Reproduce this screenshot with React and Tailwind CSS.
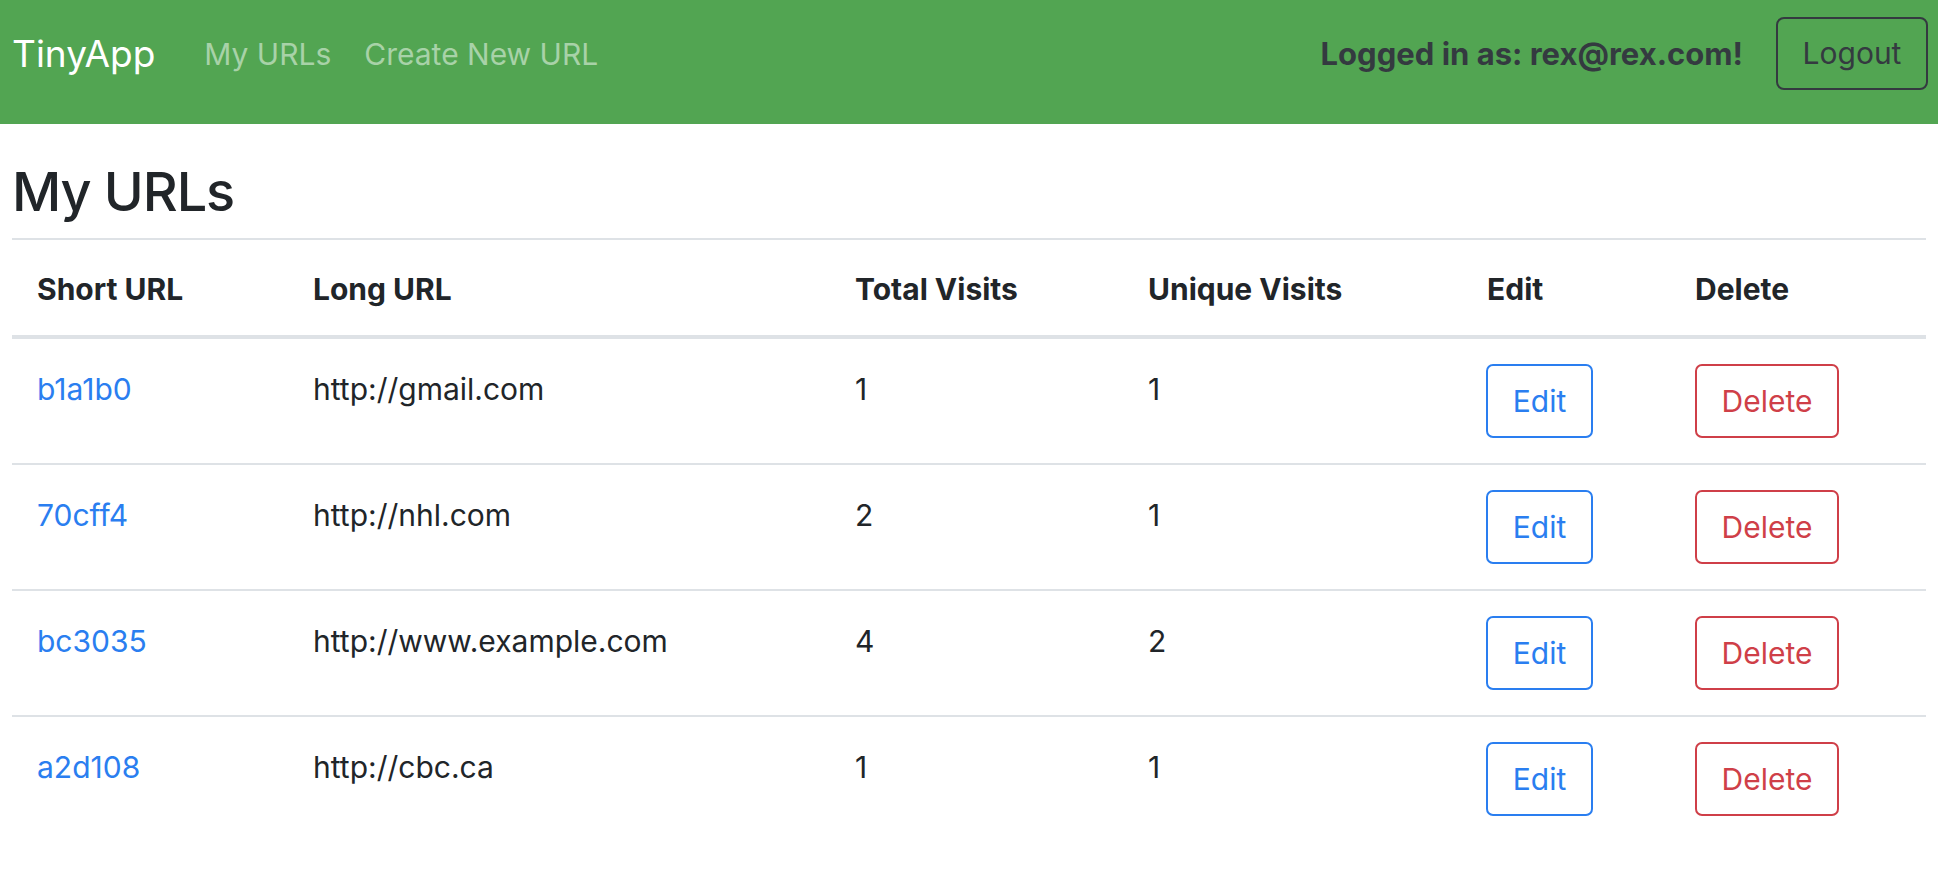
import React from 'react';

const urls = [
    { short: 'b1a1b0', long: 'http://gmail.com', total: 1, unique: 1 },
    { short: '70cff4', long: 'http://nhl.com', total: 2, unique: 1 },
    { short: 'bc3035', long: 'http://www.example.com', total: 4, unique: 2 },
    { short: 'a2d108', long: 'http://cbc.ca', total: 1, unique: 1 },
];

export default function App() {
    return (
        <div className="min-h-screen bg-white text-[#212529] font-['Inter','Liberation_Sans',sans-serif]">
            <nav className="h-[124px] bg-[#52a552] pl-[12px] pr-[10px] pt-[17px]">
                <div className="flex h-[73px] items-center">
                    <a href="#" className="text-[37px] leading-[44px] text-white">TinyApp</a>
                    <a href="#" className="ml-[49px] text-[30px] leading-[44px] text-[#a8d2a8]">My URLs</a>
                    <a href="#" className="ml-[33px] text-[30px] leading-[44px] text-[#a8d2a8]">Create New URL</a>
                    <span className="ml-auto text-[31px] font-bold leading-[44px] text-[#343a40]">
                        Logged in as: rex@rex.com!
                    </span>
                    <button className="ml-[33px] h-[73px] w-[152px] rounded-[8px] border-2 border-[#343a40] text-[30px] text-[#343a40]">
                        Logout
                    </button>
                </div>
            </nav>

            <div className="px-[12px]">
                <h2 className="mt-[33px] mb-[11px] text-[54px] font-medium leading-[70px] tracking-[-0.02em]">My URLs</h2>
                <table className="w-full table-fixed border-collapse text-[30px] leading-[44px]">
                    <colgroup>
                        <col className="w-[276px]" />
                        <col className="w-[542px]" />
                        <col className="w-[293px]" />
                        <col className="w-[339px]" />
                        <col className="w-[208px]" />
                        <col />
                    </colgroup>
                    <thead>
                        <tr className="border-t-2 border-b-4 border-[#dee2e6] text-left">
                            <th className="pl-[25px] pt-[27px] pb-[24px] font-bold">Short URL</th>
                            <th className="pl-[25px] pt-[27px] pb-[24px] font-bold">Long URL</th>
                            <th className="pl-[25px] pt-[27px] pb-[24px] font-bold">Total Visits</th>
                            <th className="pl-[25px] pt-[27px] pb-[24px] font-bold">Unique Visits</th>
                            <th className="pl-[25px] pt-[27px] pb-[24px] font-bold">Edit</th>
                            <th className="pl-[25px] pt-[27px] pb-[24px] font-bold">Delete</th>
                        </tr>
                    </thead>
                    <tbody>
                        {urls.map((u, i) => (
                            <tr key={u.short} className={i > 0 ? 'border-t-2 border-[#dee2e6]' : ''}>
                                <td className="pl-[25px] pt-[28px] pb-[22px] align-top">
                                    <a href="#" className="text-[#2a7ef0]">{u.short}</a>
                                </td>
                                <td className="pl-[25px] pt-[28px] pb-[22px] align-top">{u.long}</td>
                                <td className="pl-[25px] pt-[28px] pb-[22px] align-top">{u.total}</td>
                                <td className="pl-[25px] pt-[28px] pb-[22px] align-top">{u.unique}</td>
                                <td className="pl-[24px] pt-[25px] pb-[25px] align-top">
                                    <button className="h-[74px] w-[107px] rounded-[7px] border-2 border-[#2a7ef0] text-[30px] text-[#2a7ef0]">
                                        Edit
                                    </button>
                                </td>
                                <td className="pl-[25px] pt-[25px] pb-[25px] align-top">
                                    <button className="h-[74px] w-[144px] rounded-[7px] border-2 border-[#cf3f48] text-[30px] text-[#cf3f48]">
                                        Delete
                                    </button>
                                </td>
                            </tr>
                        ))}
                    </tbody>
                </table>
            </div>
        </div>
    );
}
